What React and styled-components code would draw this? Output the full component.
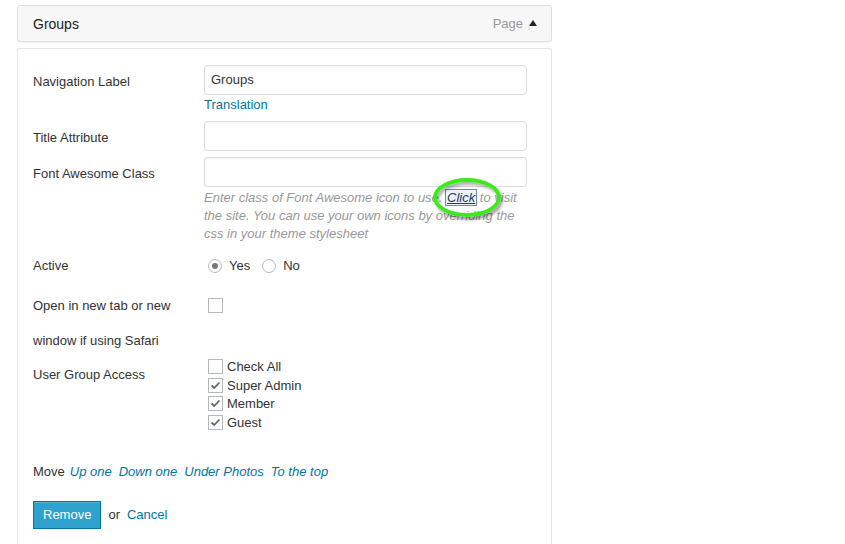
import React from "react";
import styled, { createGlobalStyle } from "styled-components";

const Global = createGlobalStyle`
  html, body { margin: 0; padding: 0; background: #fff; }
  body { font-family: "Liberation Sans", Arial, sans-serif; font-size: 13px; color: #333; }
`;

const Page = styled.div`
  width: 535px;
  padding: 5px 0 0 17px;
`;

const Header = styled.div`
  height: 35px;
  border: 1px solid #dfdfdf;
  border-radius: 3px;
  background: #f7f7f7;
  display: flex;
  align-items: center;
  justify-content: space-between;
  padding: 0 14px 0 15px;
  box-shadow: 0 1px 1px rgba(0,0,0,0.04);
`;

const Title = styled.span`
  font-size: 14px;
  color: #222;
`;

const Meta = styled.span`
  display: flex;
  align-items: center;
  gap: 6px;
  color: #999;
  font-size: 13px;
`;

const Arrow = styled.span`
  width: 0;
  height: 0;
  border-left: 4px solid transparent;
  border-right: 4px solid transparent;
  border-bottom: 6px solid #222;
  margin-top: -1px;
`;

const Body = styled.div`
  margin-top: 6px;
  border: 1px solid #e5e5e5;
  border-bottom: none;
  border-radius: 3px 3px 0 0;
  padding: 16px 15px 20px;
  height: 480px;
`;

const Row = styled.div`
  display: flex;
  align-items: flex-start;
  margin-top: ${(p) => p.$mt || 0}px;
`;

const Label = styled.div`
  width: 171px;
  flex: none;
  padding-top: ${(p) => p.$pt ?? 8}px;
  line-height: ${(p) => p.$lh || 18}px;
  color: #333;
`;

const Control = styled.div`
  width: 323px;
  position: relative;
`;

const Input = styled.div`
  box-sizing: border-box;
  height: 30px;
  border: 1px solid #ddd;
  border-radius: 3px;
  box-shadow: inset 0 1px 2px rgba(0,0,0,0.05);
  padding: 0 6px;
  line-height: 28px;
  color: #333;
  font-size: 13px;
  background: #fff;
`;

const Link = styled.a`
  color: #0074a2;
  text-decoration: none;
  font-style: ${(p) => (p.$italic ? "italic" : "normal")};
  margin-left: ${(p) => p.$ml || 0}px;
`;

const SubLink = styled.div`
  line-height: 18px;
  margin-top: 1px;
`;

const Help = styled.div`
  margin-top: 2px;
  font-style: italic;
  color: #999;
  line-height: 18px;
  position: relative;
`;

const ClickBox = styled.span`
  color: #1d3a5e;
  text-decoration: underline;
  border: 1px solid #6c8cae;
  background: #eef4fb;
  padding: 0 1px;
  margin: 0 -1px;
`;

const Ring = styled.span`
  position: absolute;
  left: 229px;
  top: -11px;
  width: 60px;
  height: 31px;
  border: 4px solid #3ce91a;
  border-radius: 50%;
  box-shadow: 2px 3px 3px rgba(0,0,0,0.35), inset 2px 3px 3px rgba(0,0,0,0.3);
  pointer-events: none;
`;

const Options = styled.div`
  display: flex;
  align-items: center;
  padding-left: 4px;
  line-height: 18px;
  gap: 7px;
`;

const Radio = styled.span`
  box-sizing: border-box;
  width: 14px;
  height: 14px;
  border: 1px solid #b4b9be;
  border-radius: 50%;
  background: #fff;
  display: inline-flex;
  align-items: center;
  justify-content: center;
  flex: none;
  &::after {
    content: "";
    width: 6px;
    height: 6px;
    border-radius: 50%;
    background: ${(p) => (p.$on ? "#777" : "transparent")};
  }
`;

const Opt = styled.span`
  margin-right: 5px;
`;

const Box = styled.span`
  box-sizing: border-box;
  width: 15px;
  height: 15px;
  border: 1px solid #b4b9be;
  background: #fff;
  display: inline-flex;
  align-items: center;
  justify-content: center;
  flex: none;
`;

const CheckList = styled.div`
  padding-left: 4px;
  display: flex;
  flex-direction: column;
`;

const CheckItem = styled.div`
  display: flex;
  align-items: center;
  gap: 4px;
  height: 18.7px;
`;

const MoveRow = styled.div`
  margin-top: 31px;
  line-height: 18px;
  color: #333;
`;

const Actions = styled.div`
  margin-top: 20px;
  display: flex;
  align-items: center;
  gap: 7px;
`;

const Button = styled.button`
  box-sizing: border-box;
  height: 28px;
  padding: 0 9px;
  background: #2ea2cc;
  border: 1px solid #0074a2;
  border-radius: 0;
  color: #fff;
  font-family: "Liberation Sans", Arial, sans-serif;
  font-size: 13px;
  box-shadow: inset 0 1px 0 rgba(120,200,230,0.5);
`;

const Tick = () => (
  <svg width="11" height="9" viewBox="0 0 11 9">
    <path d="M1.5 4.5 L4.2 7 L9.5 1.5" fill="none" stroke="#666" strokeWidth="1.8" />
  </svg>
);

const Check = ({ on, children }) => (
  <CheckItem>
    <Box>{on && <Tick />}</Box>
    <span>{children}</span>
  </CheckItem>
);

export default function App() {
  return (
    <>
      <Global />
      <Page>
        <Header>
          <Title>Groups</Title>
          <Meta>
            Page <Arrow />
          </Meta>
        </Header>
        <Body>
          <Row>
            <Label>Navigation Label</Label>
            <Control>
              <Input>Groups</Input>
              <SubLink>
                <Link href="#">Translation</Link>
              </SubLink>
            </Control>
          </Row>
          <Row $mt={7}>
            <Label>Title Attribute</Label>
            <Control>
              <Input />
            </Control>
          </Row>
          <Row $mt={6}>
            <Label $pt={8}>Font Awesome Class</Label>
            <Control>
              <Input />
              <Help>
                Enter class of Font Awesome icon to use. <ClickBox>Click</ClickBox> to visit
                <br />
                the site. You can use your own icons by overriding the
                <br />
                css in your theme stylesheet
                <Ring />
              </Help>
            </Control>
          </Row>
          <Row $mt={14}>
            <Label $pt={0}>Active</Label>
            <Options>
              <Radio $on />
              <Opt>Yes</Opt>
              <Radio />
              <Opt>No</Opt>
            </Options>
          </Row>
          <Row $mt={13}>
            <Label $pt={0} $lh={35}>
              Open in new tab or new
              <br />
              window if using Safari
            </Label>
            <Options style={{ height: 35 }}>
              <Box />
            </Options>
          </Row>
          <Row $mt={-1}>
            <Label $pt={9}>User Group Access</Label>
            <CheckList>
              <Check>Check All</Check>
              <Check on>Super Admin</Check>
              <Check on>Member</Check>
              <Check on>Guest</Check>
            </CheckList>
          </Row>
          <MoveRow>
            Move
            <Link href="#" $italic $ml={5}>Up one</Link>
            <Link href="#" $italic $ml={7}>Down one</Link>
            <Link href="#" $italic $ml={7}>Under Photos</Link>
            <Link href="#" $italic $ml={7}>To the top</Link>
          </MoveRow>
          <Actions>
            <Button>Remove</Button>
            <span>or</span>
            <Link href="#">Cancel</Link>
          </Actions>
        </Body>
      </Page>
    </>
  );
}
